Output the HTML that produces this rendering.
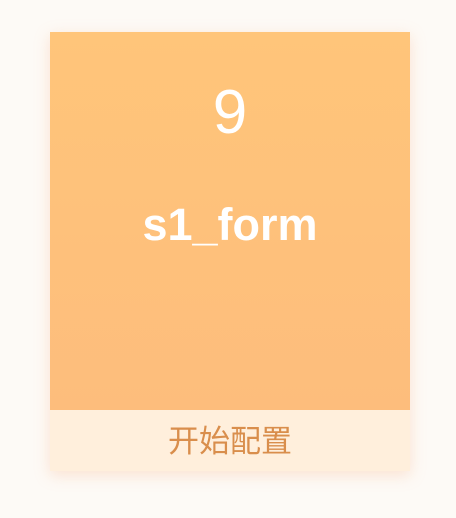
<!DOCTYPE html>
<html><head><meta charset="utf-8"><style>
html,body{margin:0;padding:0;width:456px;height:518px;background:#fdfaf6;overflow:hidden}
.card{position:absolute;left:50px;top:32px;width:360px;height:439px;box-shadow:0 4px 14px rgba(250,180,140,0.35)}
.top{position:absolute;left:0;top:0;width:360px;height:378px;background:linear-gradient(#ffc57a,#fdbd7c)}
.num{position:absolute;left:0;width:360px;top:46px;text-align:center;color:#fff;font:normal 62px/70px "Liberation Sans",sans-serif}
.name{position:absolute;left:0;width:360px;top:168px;text-align:center;color:#fff;font:bold 45px/50px "Liberation Sans",sans-serif}
.foot{position:absolute;left:0;top:378px;width:360px;height:61px;background:#ffefdc;color:#d98e4c;text-align:center;font:31px/64px "Liberation Sans","Noto Sans CJK SC",sans-serif}
</style></head><body>
<div class="card"><div class="top"><div class="num">9</div><div class="name">s1_form</div></div><div class="foot">开始配置</div></div>
</body></html>
